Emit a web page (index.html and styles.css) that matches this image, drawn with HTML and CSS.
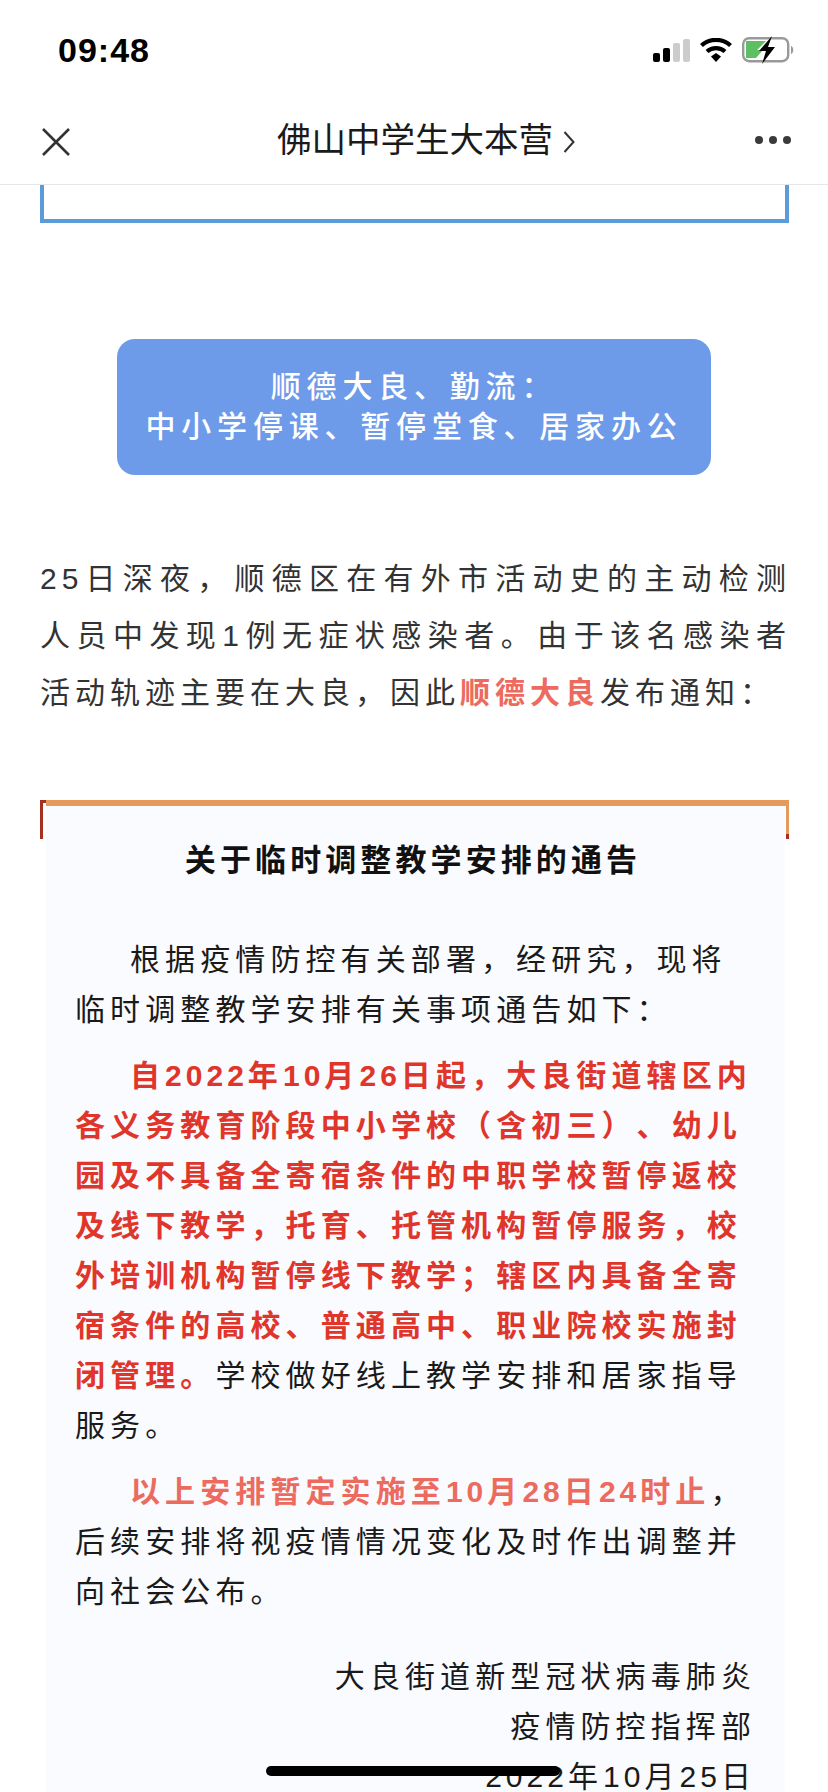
FILE: index.html
```html
<!DOCTYPE html>
<html lang="zh-CN">
<head>
<meta charset="utf-8">
<title>佛山中学生大本营</title>
<link rel="stylesheet" href="styles.css">
</head>
<body>
<div class="phone">
  <header class="top">
    <div class="status">
      <span class="time">09:48</span>
      <div class="status-icons">
        <svg width="37" height="23" viewBox="0 0 37 23"><rect x="0" y="14" width="7" height="9" rx="2" fill="#000"/><rect x="10" y="9" width="7" height="14" rx="2" fill="#000"/><rect x="20" y="4" width="7" height="19" rx="2" fill="#ccc"/><rect x="30" y="0" width="7" height="23" rx="2" fill="#ccc"/></svg>
        <svg width="32" height="24" viewBox="0 0 32 24"><path d="M1.500 7.500C9.500 0 22.500 0 30.500 7.500" fill="none" stroke="#000" stroke-width="4.200"/><path d="M7 13.500C12 9 20 9 25 13.500" fill="none" stroke="#000" stroke-width="4.200"/><path d="M11 18.500L16 15L21 18.500L16 24Z" fill="#000"/></svg>
        <svg width="53" height="28" viewBox="0 0 53 28"><rect x="1.200" y="2.200" width="45" height="23" rx="6" fill="none" stroke="#999" stroke-width="2.400"/><path d="M4 5H24L15 14H21L14 22H4Z" fill="#5cbf62"/><path d="M30 0L17 15H24L20 28L33 11H26Z" fill="#000"/><path d="M49 10C52 11 52 17 49 18Z" fill="#999"/></svg>
      </div>
    </div>
    <nav class="bar">
      <svg class="close" width="30" height="30" viewBox="0 0 30 30"><path d="M2 2L28 28M28 2L2 28" stroke="#333" stroke-width="2.600" fill="none"/></svg>
      <div class="title">佛山中学生大本营<svg class="chev" width="12" height="24" viewBox="0 0 12 24"><path d="M1.500 2L10.500 12L1.500 22" stroke="#333" stroke-width="2" fill="none"/></svg></div>
      <div class="dots"><i></i><i></i><i></i></div>
    </nav>
  </header>

  <main class="article">
    <div class="blue-frame"></div>
    <div class="pill">顺德大良、勤流：<br>中小学停课、暂停堂食、居家办公</div>
    <div class="lead">
      <p class="line just">25日深夜，顺德区在有外市活动史的主动检测</p>
      <p class="line just">人员中发现1例无症状感染者。由于该名感染者</p>
      <p class="line">活动轨迹主要在大良，因此<b class="hl">顺德大良</b>发布通知：</p>
    </div>
    <section class="notice">
      <div class="notice-frame"></div>
      <div class="card">
        <h1>关于临时调整教学安排的通告</h1>
        <p class="para first">根据疫情防控有关部署，经研究，现将<br>临时调整教学安排有关事项通告如下：</p>
        <p class="para"><span class="indent"></span><b class="red">自<span class="num">2022</span>年<span class="num">10</span>月<span class="num">26</span>日起，大良街道辖区内<br>各义务教育阶段中小学校（含初三）、幼儿<br>园及不具备全寄宿条件的中职学校暂停返校<br>及线下教学，托育、托管机构暂停服务，校<br>外培训机构暂停线下教学；辖区内具备全寄<br>宿条件的高校、普通高中、职业院校实施封<br>闭管理。</b>学校做好线上教学安排和居家指导<br>服务。</p>
        <p class="para"><span class="indent"></span><b class="hl">以上安排暂定实施至<span class="num">10</span>月<span class="num">28</span>日<span class="num">24</span>时止</b>，<br>后续安排将视疫情情况变化及时作出调整并<br>向社会公布。</p>
        <p class="sign">大良街道新型冠状病毒肺炎<br>疫情防控指挥部<br><span class="num">2022</span>年<span class="num">10</span>月<span class="num">25</span>日</p>
      </div>
    </section>
  </main>
  <div class="home"></div>
</div>
</body>
</html>
```
FILE: styles.css
```css
* { box-sizing: border-box; }
html, body { margin: 0; padding: 0; background: #fff; }
.phone {
  position: relative;
  width: 828px;
  height: 1792px;
  overflow: hidden;
  font-family: "Liberation Sans", "Noto Sans CJK SC", sans-serif;
  color: #222;
  text-spacing-trim: space-all;
}
.top { height: 185px; border-bottom: 1px solid #e6e6e6; }
.status { height: 100px; display: flex; justify-content: space-between; align-items: center; padding: 0 33px 0 58px; }
.time { font-size: 34px; font-weight: 700; color: #000; letter-spacing: 1px; }
.status-icons { display: flex; align-items: center; gap: 10px; }
.bar { height: 84px; display: flex; align-items: center; justify-content: space-between; padding: 0 37px 0 41px; position: relative; }
.title { position: absolute; left: 0; right: 0; text-align: center; font-size: 34.500px; color: #1a1a1a; padding: 0 0 10px 24px; }
.chev { margin-left: 10px; vertical-align: -2px; }
.dots { display: flex; gap: 6px; margin-bottom: 4px; }
.dots i { width: 8px; height: 8px; border-radius: 50%; background: #3a3a3a; }
.article { padding: 0 39px 0 40px; }
.blue-frame { height: 38px; border: 4px solid #5b9bd9; border-top: 0; }
.pill {
  width: 594px;
  height: 136px;
  margin: 116px 0 0 77px;
  padding-top: 28px;
  background: #6d9ae9;
  border-radius: 18px;
  color: #fff;
  text-align: center;
  font-size: 30px;
  font-weight: 500;
  line-height: 40px;
  letter-spacing: 5.800px;
}
.lead { margin: 75px 0 0; font-size: 30px; line-height: 57px; letter-spacing: 5px; color: #333; }
.line { margin: 0; white-space: nowrap; }
.just { white-space: normal; text-align: justify; text-align-last: justify; margin-right: -2px; }
.hl { color: #ec6a5e; font-weight: 700; }
.notice { position: relative; margin-top: 79px; }
.notice-frame { height: 39px; border: 3px solid #a5301f; border-bottom: 0; position: relative; }
.notice-frame::before { content: ""; position: absolute; left: 3px; right: -3px; top: -3px; height: 6px; background: #e39a5b; }
.notice-frame::after { content: ""; position: absolute; right: -3px; top: 0; width: 3px; height: 31px; background: #e39a5b; }
.card { position: absolute; left: 6px; right: 4px; top: 6px; height: 1100px; background: #fafbff; padding: 0 34px 0 29px; color: #1a1a1a; }
.card h1 { margin: 25px 0 0; text-align: center; font-size: 31px; line-height: 60px; font-weight: 700; color: #111; letter-spacing: 4.100px; }
.para { margin: 0; font-size: 30px; line-height: 50px; letter-spacing: 5.100px; white-space: nowrap; }
.para.first { margin-top: 44px; text-indent: 55px; }
.para + .para { margin-top: 16px; }
.indent { display: inline-block; width: 55px; }
.num { letter-spacing: 4px; }
.red { color: #e0352b; font-weight: 700; }
.sign { margin: 35px -5px 0 0; text-align: right; font-size: 30px; line-height: 50px; letter-spacing: 5.100px; white-space: nowrap; }
.home { position: absolute; left: 266px; top: 1766px; width: 294px; height: 10px; border-radius: 5px; background: #000; }
```
